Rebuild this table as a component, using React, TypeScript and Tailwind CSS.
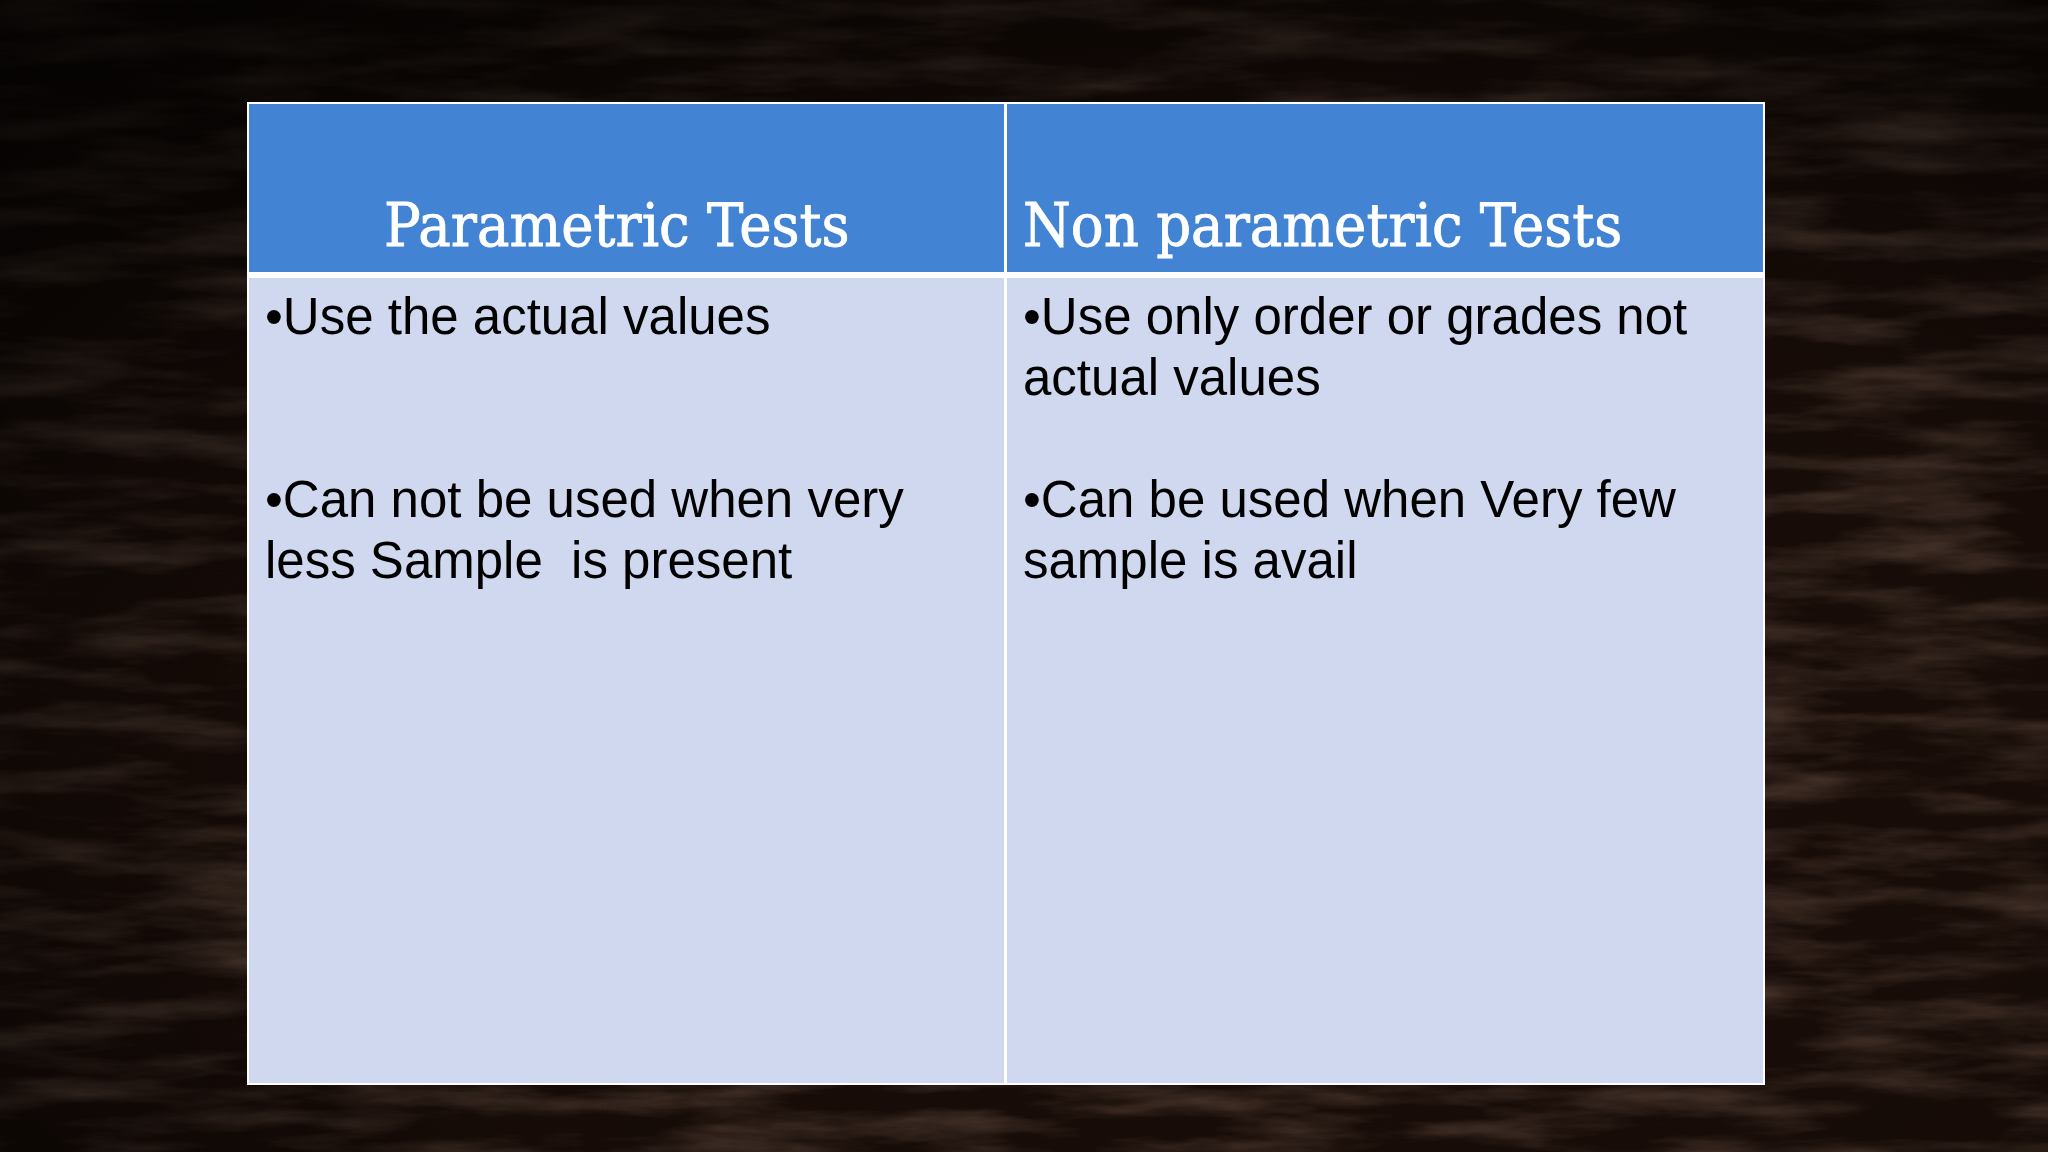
const columns = [
  {
    title: 'Parametric Tests',
    centered: true,
    first: ['•Use the actual values'],
    second: ['•Can not be used when very', 'less Sample  is present'],
  },
  {
    title: 'Non parametric Tests',
    centered: false,
    first: ['•Use only order or grades not', 'actual values'],
    second: ['•Can be used when Very few', 'sample is avail'],
  },
];

function WoodBackground() {
  return (
    <svg className="absolute inset-0 h-full w-full" viewBox="0 0 2048 1152" preserveAspectRatio="none">
      <defs>
        <filter id="grain" x="0" y="0" width="100%" height="100%">
          <feTurbulence type="fractalNoise" baseFrequency="0.006 0.035" numOctaves="5" seed="11" />
          <feColorMatrix
            type="matrix"
            values="0 0 0 0 0.22  0 0 0 0 0.13  0 0 0 0 0.09  1.1 0 0 0 -0.45"
          />
        </filter>
        <radialGradient id="vignette" cx="62%" cy="70%" r="85%">
          <stop offset="0%" stopColor="#000" stopOpacity="0" />
          <stop offset="55%" stopColor="#000" stopOpacity="0.2" />
          <stop offset="100%" stopColor="#000" stopOpacity="0.8" />
        </radialGradient>
      </defs>
      <rect width="2048" height="1152" fill="#1b0e09" />
      <rect width="2048" height="1152" filter="url(#grain)" />
      <rect width="2048" height="1152" fill="url(#vignette)" />
    </svg>
  );
}

function Lines({ lines }: { lines: string[] }) {
  return (
    <div>
      {lines.map((l) => (
        <div key={l} className="whitespace-pre leading-[61px]">
          {l}
        </div>
      ))}
    </div>
  );
}

export default function App() {
  return (
    <div className="relative h-[1152px] w-[2048px] overflow-hidden bg-[#170b07]">
      <WoodBackground />
      <div className="relative pl-[247px] pt-[102px]">
        <div className="grid w-[1518px] grid-cols-[755px_756px] grid-rows-[168px_805px] gap-x-[3px] gap-y-[6px] bg-white p-[2px]">
          {columns.map((c) => (
            <div
              key={c.title}
              className={`flex items-end bg-[#4383d3] pb-[17px] ${c.centered ? 'justify-center pr-[20px]' : 'pl-[16px]'}`}
            >
              <span
                className={`inline-block whitespace-nowrap font-['DejaVu_Serif',serif] text-[60px] leading-none text-white [-webkit-text-stroke:0.9px_white] scale-x-[0.91] ${c.centered ? 'origin-center' : 'origin-left'}`}
              >
                {c.title}
              </span>
            </div>
          ))}
          {columns.map((c) => (
            <div
              key={c.title + '-body'}
              className="bg-[#d0d8ef] pl-[16px] pt-[8px] font-['Liberation_Sans',Arial,sans-serif] text-[51px] text-black"
            >
              <div className="h-[183px]">
                <Lines lines={c.first} />
              </div>
              <Lines lines={c.second} />
            </div>
          ))}
        </div>
      </div>
    </div>
  );
}
